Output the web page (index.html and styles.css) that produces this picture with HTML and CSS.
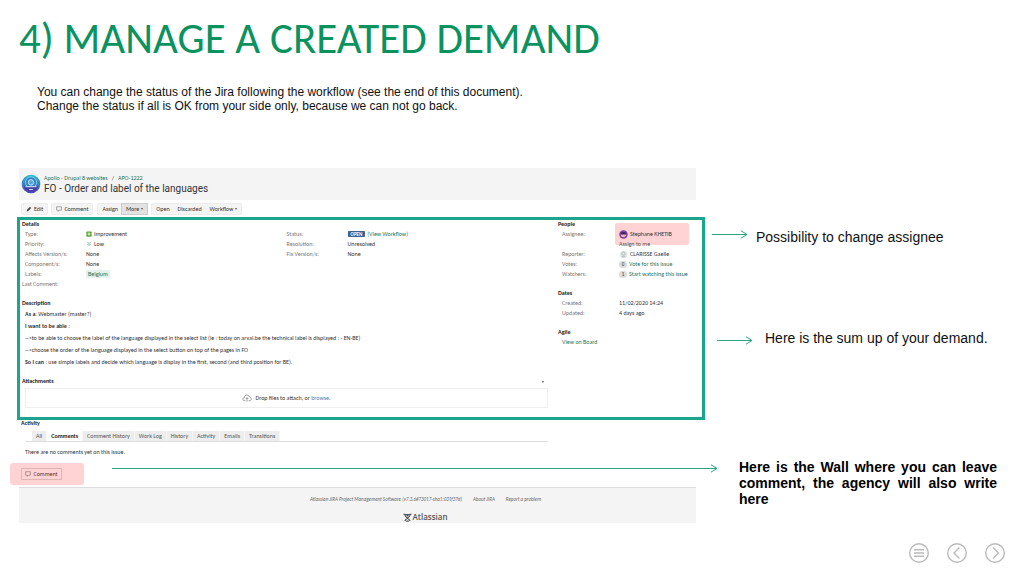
FILE: index.html
```html
<!DOCTYPE html>
<html lang="en">
<head>
<meta charset="utf-8">
<meta name="viewport" content="width=device-width, initial-scale=1">
<title>Manage a created demand</title>
<link rel="stylesheet" href="styles.css">
</head>
<body>
<header class="slide-header">
  <h1 class="slide-title">4) MANAGE A CREATED DEMAND</h1>
  <p class="intro">You can change the status of the Jira following the workflow (see the end of this document).<br>Change the status if all is OK from your side only, because we can not go back.</p>
</header>

<main class="board">
  <section class="issue" aria-label="Issue">
    <header class="issue-head">
      <svg class="avatar" viewBox="0 0 20 20" aria-hidden="true">
        <defs><linearGradient id="sky" x1="0" y1="0" x2="0" y2="1"><stop offset="0" stop-color="#27b9d8"/><stop offset="1" stop-color="#5147b5"/></linearGradient></defs>
        <circle cx="10" cy="10" r="9.3" fill="url(#sky)"/>
        <circle cx="10" cy="8.3" r="5.6" fill="#3b7fc9" stroke="#74d6e8" stroke-width="1"/>
        <circle cx="10" cy="8.3" r="2.7" fill="#5aa5dc" stroke="#c4eff5" stroke-width=".9"/>
        <path d="M3 12.2h14c-.4 3-2.400 4.700-4.200 5.200H7.200C5.400 16.900 3.400 15.200 3 12.200z" fill="#4938a5"/>
        <path d="M4.500 12.600h11M8 15.500h4" stroke="#b7d9f3" stroke-width="1.100"/>
      </svg>
      <div>
        <nav class="crumbs"><a href="#">Apollo - Drupal 8 websites</a><span>/</span><a href="#">APO-1222</a></nav>
        <h2 class="issue-title">FO - Order and label of the languages</h2>
      </div>
    </header>

    <div class="toolbar">
      <div class="group"><button type="button"><svg class="ico" viewBox="0 0 8 8" aria-hidden="true"><path d="M.8 7.200l.6-2.200L5.300 1.100l1.600 1.600L3 6.600z" fill="#444"/></svg>Edit</button></div>
      <div class="group"><button type="button"><svg class="ico" viewBox="0 0 8 8" aria-hidden="true"><path d="M.8 1h6.400v4.600H4.600L3.200 7.200V5.600H.8z" fill="none" stroke="#777" stroke-width=".8"/></svg>Comment</button></div>
      <div class="group wide"><button type="button">Assign</button><button type="button" class="pressed">More <i class="caret"></i></button></div>
      <div class="group"><button type="button">Open</button><button type="button">Discarded</button><button type="button">Workflow <i class="caret"></i></button></div>
    </div>

    <div class="summary">
      <div class="summary-main">
        <h3>Details</h3>
        <dl class="details">
          <dt>Type:</dt><dd><svg class="ico" viewBox="0 0 8 8" aria-hidden="true"><rect x=".5" y=".5" width="7" height="7" rx="1" fill="#55a82e"/><path d="M4 2v4M2 4h4" stroke="#fff" stroke-width="1.200"/></svg>Improvement</dd>
          <dt>Status:</dt><dd><b class="lozenge">OPEN</b> <a href="#">(View Workflow)</a></dd>
          <dt>Priority:</dt><dd><svg class="ico" viewBox="0 0 8 8" aria-hidden="true"><path d="M2 1.500l2 2 2-2M2 4l2 2 2-2" fill="none" stroke="#4b9a78" stroke-width="1"/></svg>Low</dd>
          <dt>Resolution:</dt><dd>Unresolved</dd>
          <dt>Affects Version/s:</dt><dd>None</dd>
          <dt>Fix Version/s:</dt><dd>None</dd>
          <dt>Component/s:</dt><dd class="span">None</dd>
          <dt>Labels:</dt><dd class="span"><a class="tag" href="#">Belgium</a></dd>
          <dt class="outdent">Last Comment:</dt><dd class="span"></dd>
        </dl>

        <h3 class="spaced">Description</h3>
        <div class="description">
          <p><b>As a</b>: Webmaster (master?)</p>
          <p><b>I want to be able</b> :</p>
          <p>--&gt;to be able to choose the label of the language displayed in the select list (ie : today on arval.be the technical label is displayed : - EN-BE)</p>
          <p>--&gt;choose the order of the language displayed in the select button on top of the pages in FO</p>
          <p><b>So I can</b> : use simple labels and decide which language is display in the first, second (and third position for BE).</p>
        </div>

        <h3 class="attach">Attachments <i class="caret"></i></h3>
        <div class="dropzone">
          <svg class="cloud" viewBox="0 0 12 10" aria-hidden="true"><path d="M4 8.500H3C.2 8.500.2 4.800 2.700 4.600 2.700.4 8.400.2 9 3.700c3 .1 3 4.700.3 4.800H8M6 9.500V4.700M4.400 6.200L6 4.600l1.600 1.600" fill="none" stroke="#777" stroke-width=".9"/></svg>
          <span>Drop files to attach, or <a class="browse" href="#">browse</a>.</span>
        </div>
      </div>

      <aside class="summary-side">
        <h3>People</h3>
        <dl class="facts">
          <dt>Assignee:</dt><dd class="assignee"><svg class="face" viewBox="0 0 10 10" aria-hidden="true"><circle cx="5" cy="5" r="4.700" fill="#7b3fa0"/><path d="M2 5h6c0 4-6 4-6 0z" fill="#efb7b4"/><path d="M2 4.600c0-3.200 6-3.200 6 0z" fill="#43235f"/></svg>Stephane KHETIB</dd>
          <dt></dt><dd><a class="plain" href="#">Assign to me</a></dd>
          <dt>Reporter:</dt><dd><svg class="face" viewBox="0 0 10 10" aria-hidden="true"><circle cx="5" cy="5" r="4" fill="#e3e6e6"/><path d="M3 4c0-2.500 4-2.500 4 0S3 6.500 3 4zM3 7.500h4" fill="none" stroke="#9aa" stroke-width=".8"/></svg>CLARISSE Gaelle</dd>
          <dt>Votes:</dt><dd><i class="count">0</i><a href="#">Vote for this issue</a></dd>
          <dt>Watchers:</dt><dd><i class="count">1</i><a href="#">Start watching this issue</a></dd>
        </dl>
        <h3 class="spaced">Dates</h3>
        <dl class="facts">
          <dt>Created:</dt><dd>11/02/2020 14:24</dd>
          <dt>Updated:</dt><dd>4 days ago</dd>
        </dl>
        <h3 class="spaced">Agile</h3>
        <p class="agile"><a href="#">View on Board</a></p>
      </aside>
    </div>

    <div class="activity">
      <h3>Activity</h3>
      <div class="tabs">
        <button type="button">All</button><button type="button" class="current">Comments</button><button type="button">Comment History</button><button type="button">Work Log</button><button type="button">History</button><button type="button">Activity</button><button type="button">Emails</button><button type="button">Transitions</button>
      </div>
      <p class="empty">There are no comments yet on this issue.</p>
    </div>

    <div class="comment-row">
      <div class="spot"><button type="button"><svg class="ico" viewBox="0 0 8 8" aria-hidden="true"><path d="M.8 1h6.400v4.600H4.600L3.200 7.200V5.600H.8z" fill="none" stroke="#866" stroke-width=".8"/></svg>Comment</button></div>
      <div class="arrow long"><svg viewBox="0 0 8 9" aria-hidden="true"><path d="M1 .8l6 3.700-6 3.700"/></svg></div>
    </div>

    <footer class="issue-foot">
      <p><a href="#">Atlassian JIRA Project Management Software (v7.3.6#73017-sha1:031f37d)</a><a href="#">About JIRA</a><a href="#">Report a problem</a></p>
      <div class="brand"><svg viewBox="0 0 10 10" aria-hidden="true"><path d="M.5 1l2 .8h5l2-.8M2 2.500c1.500 3 4.500 3.500 6 6.500M8 2.500C6.500 5.500 3.500 6 2 9M3.500 9h3" fill="none" stroke="#555" stroke-width="1.200"/><circle cx="5" cy="2.800" r="1" fill="#555"/></svg>Atlassian</div>
    </footer>
  </section>

  <section class="notes" aria-label="Explanations">
    <div class="note first"><div class="arrow"><svg viewBox="0 0 8 9" aria-hidden="true"><path d="M1 .8l6 3.700-6 3.700"/></svg></div><p>Possibility to change assignee</p></div>
    <div class="note second"><div class="arrow"><svg viewBox="0 0 8 9" aria-hidden="true"><path d="M1 .8l6 3.700-6 3.700"/></svg></div><p>Here is the sum up of your demand.</p></div>
    <p class="wall">Here is the Wall where you can leave comment, the agency will also write here</p>
  </section>
</main>

<nav class="pager" aria-label="Slides">
  <button type="button" aria-label="Contents"><svg viewBox="0 0 20 20"><circle cx="10" cy="10" r="9.300"/><path d="M5 6.700h10M5 10h10M5 13.300h10"/></svg></button>
  <button type="button" aria-label="Previous"><svg viewBox="0 0 20 20"><circle cx="10" cy="10" r="9.300"/><path d="M12.500 4.500L7 10l5.500 5.500"/></svg></button>
  <button type="button" aria-label="Next"><svg viewBox="0 0 20 20"><circle cx="10" cy="10" r="9.300"/><path d="M8 4.500l5.500 5.500L8 15.500"/></svg></button>
</nav>
</body>
</html>
```
FILE: styles.css
```css
* { box-sizing: border-box; }
body, h1, h2, h3, p, dl, dd { margin: 0; }
body { background: #fff; color: #111; font-family: "Liberation Sans", Arial, sans-serif; }
a { color: #2a7458; text-decoration: none; }
button { font: inherit; color: inherit; border: 0; background: none; padding: 0; }
svg { display: block; flex: none; }

.slide-header { padding: 15px 19px 0; }
.slide-title { font: 400 43px/48px Carlito, Calibri, Lato, sans-serif; color: #0b935f; }
.intro { padding: 22px 18px 0; font-size: 12px; line-height: 14px; color: #111; }

.board { display: grid; grid-template-columns: minmax(0, 705fr) minmax(0, 319fr); margin-top: 55px; }

.issue { font-family: Carlito, Calibri, "Liberation Sans", sans-serif; font-size: 6px; line-height: 10px; color: #333; white-space: nowrap; }
.issue h3 { font-size: 6px; line-height: 9px; color: #222; }
.ico { width: 6px; height: 6px; }
.caret { display: inline-block; border: 1px solid transparent; border-top: 2px solid #555; border-bottom: 0; vertical-align: middle; }

.issue-head { display: flex; align-items: center; gap: 3px; height: 32px; margin: 0 9px 0 19px; padding-left: 2px; background: #f4f4f4; }
.avatar { width: 20px; height: 20px; }
.crumbs { display: flex; gap: 4px; line-height: 9px; }
.issue-title { font: 400 10px/12px Roboto, "Liberation Sans", sans-serif; color: #333; }

.toolbar { display: flex; gap: 3px; padding: 3px 21px 2px; }
.group { display: flex; background: #f4f4f4; border: 1px solid #ececec; border-radius: 2px; }
.group.wide { margin-left: 1px; }
.group button { display: flex; align-items: center; gap: 2px; height: 10px; padding: 0 4px; }
.group .pressed { background: #e2e2e2; outline: 1px solid #ccc; }

.summary { display: grid; grid-template-columns: minmax(0, 526fr) minmax(0, 131fr); gap: 10px; margin-left: 17px; padding: 0 13px 9px 2px; border: 3px solid #1ba58c; }
.spaced { margin-top: 10px; }
.details { display: grid; grid-template-columns: 61px minmax(0, 199fr) 61px minmax(0, 199fr); padding-left: 3px; grid-auto-rows: 10px; }
dt { color: #777; }
dd { display: flex; align-items: center; gap: 2px; }
.span { grid-column: span 3; }
.outdent { margin-left: -3px; }
.lozenge { background: #3b6291; color: #fff; font-size: 5px; line-height: 6px; padding: 0 3px; border-radius: 1px; }
.tag { background: #e4f1ec; line-height: 8px; padding: 0 2px; border-radius: 1px; }
.description { padding-left: 3px; line-height: 12px; }
.description b { color: #333; }
.attach { display: flex; justify-content: space-between; align-items: center; margin-top: 9px; padding-right: 4px; }
.dropzone { display: flex; align-items: center; justify-content: center; gap: 3px; height: 20px; margin: 2px 0 0 3px; border: 1px solid #eee; }
.cloud { width: 10px; height: 8px; }
.browse { color: #4a7fb0; }

.facts { display: grid; grid-template-columns: 57px minmax(0, 1fr); grid-auto-rows: 10px; padding-left: 4px; }
.facts dd { position: relative; }
.assignee { z-index: 0; }
.assignee::before { content: ""; position: absolute; inset: -6px 0 -6px -4px; border-radius: 2px; background: #ffd3d3; z-index: -1; }
.face { width: 9px; height: 9px; }
.plain { color: #555; }
.count { flex: none; width: 8px; height: 7px; border-radius: 3px; background: #ddd; font-size: 5px; line-height: 7px; font-style: normal; text-align: center; }
.agile { padding-left: 4px; }

.activity { padding: 0 157px 0 21px; }
.activity h3 { line-height: 7px; }
.tabs { display: flex; margin: 4px 0 0 4px; padding-left: 7px; border-bottom: 1px solid #ddd; }
.tabs button { height: 10px; padding: 0 4px; background: #ededed; color: #555; border-right: 1px solid #f6f6f6; }
.tabs .current { background: #fff; color: #222; font-weight: 700; }
.empty { padding: 5px 4px 6px 4px; }

.comment-row { display: flex; padding-left: 10px; }
.spot { width: 74px; height: 22px; padding: 5px 11px; background: #ffd3d3; border-radius: 3px; }
.spot button { display: flex; align-items: center; justify-content: center; gap: 2px; width: 41px; height: 12px; border: 1px solid #dfb4b4; color: #533; }

.arrow { display: flex; align-items: center; height: 11px; }
.arrow::before { content: ""; flex: 1; height: 1px; margin-right: -7px; background: #2aa582; }
.arrow svg { width: 8px; height: 9px; fill: none; stroke: #2aa582; stroke-width: 1; }
.long { flex: 1; margin: 0 -13px 0 28px; }

.issue-foot { height: 36px; margin: 2px 9px 0 19px; padding: 7px 0 0 136px; background: #f4f4f4; border-top: 1px solid #ddd; font-size: 5px; font-style: italic; text-align: center; }
.issue-foot p { display: flex; justify-content: center; gap: 11px; line-height: 9px; }
.issue-foot a { color: #666; }
.brand { display: flex; align-items: center; justify-content: center; margin-top: 8px; font: 600 8px/10px "Open Sans", "Noto Sans", sans-serif; color: #555; }
.brand svg { width: 9px; height: 9px; }

.notes { padding-right: 27px; color: #111; font-size: 14px; line-height: 16px; }
.note { display: flex; }
.note .arrow { flex: none; width: 36px; }
.first { gap: 8px; padding: 61px 0 0 7px; }
.second { gap: 12px; align-items: flex-end; padding: 85px 0 0 12px; }
.wall { margin: 113px 0 0 34px; font-weight: 700; text-align: justify; color: #000; }

.pager { display: flex; justify-content: flex-end; gap: 18px; padding: 20px 19px 0; }
.pager svg { width: 20px; height: 20px; fill: none; stroke: #bbb; stroke-width: 1.4; }
```
